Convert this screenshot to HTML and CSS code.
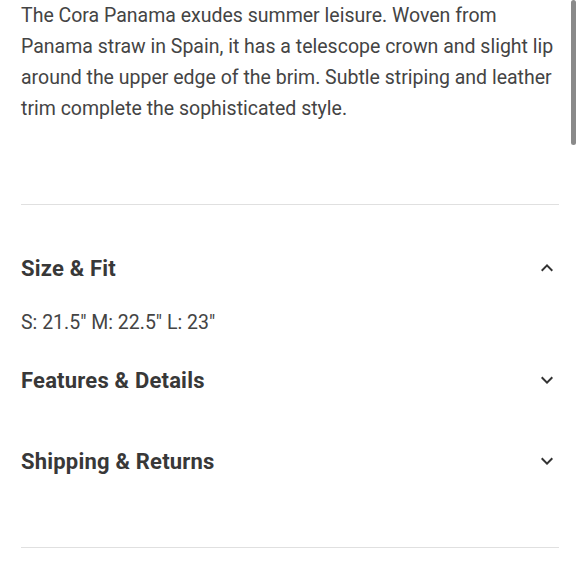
FILE: index.html
```html
<!DOCTYPE html>
<html lang="en">
<head>
  <meta charset="UTF-8" />
  <meta name="viewport" content="width=device-width, initial-scale=1" />
  <title>Cora Panama</title>
  <link rel="stylesheet" href="styles.css">
</head>
<body>
<div class="scroll-thumb"></div>
<div class="product-info">
  <p class="description">The Cora Panama exudes summer leisure. Woven from Panama straw in Spain, it has a telescope crown and slight lip around the upper edge of the brim. Subtle striping and leather trim complete the sophisticated style.</p>

  <div class="accordion">
    <div class="acc-item open">
      <div class="acc-head">
        <h3>Size &amp; Fit</h3>
        <svg class="chevron" viewBox="0 0 24 24" width="24" height="24"><path d="M7.4 15.4 12 10.8l4.6 4.6L18 14l-6-6-6 6z"/></svg>
      </div>
      <div class="acc-panel">S: 21.5" M: 22.5" L: 23"</div>
    </div>
    <div class="acc-item">
      <div class="acc-head">
        <h3>Features &amp; Details</h3>
        <svg class="chevron" viewBox="0 0 24 24" width="24" height="24"><path d="M16.6 8.6 12 13.2 7.4 8.6 6 10l6 6 6-6z"/></svg>
      </div>
    </div>
    <div class="acc-item last">
      <div class="acc-head">
        <h3>Shipping &amp; Returns</h3>
        <svg class="chevron" viewBox="0 0 24 24" width="24" height="24"><path d="M16.6 8.6 12 13.2 7.4 8.6 6 10l6 6 6-6z"/></svg>
      </div>
    </div>
  </div>
</div>
</body>
</html>
```

FILE: styles.css
```css
html, body {
  margin: 0;
  padding: 0;
  background: #fff;
}

body {
  font-family: Roboto, "Liberation Sans", sans-serif;
  color: #444;
}

.product-info {
  padding: 0 21px;
}

.description {
  margin: 0 0 80px;
  font-size: 19.5px;
  line-height: 31px;
}

.accordion {
  display: flex;
  flex-direction: column;
  gap: 22px;
  border-top: 1px solid #e0e0e0;
  border-bottom: 1px solid #e0e0e0;
  padding: 43px 0 66px;
}

.acc-head {
  height: 40px;
  display: flex;
  align-items: center;
  justify-content: space-between;
}

.acc-head h3 {
  margin: 0;
  font-size: 22px;
  font-weight: 700;
  letter-spacing: 0.2px;
  color: #383838;
}

.chevron {
  fill: #333;
}

.acc-panel {
  padding-top: 20px;
  font-size: 19.5px;
  line-height: 30px;
}

.acc-item.last {
  margin-top: 19px;
}

.scroll-thumb {
  position: fixed;
  top: 0;
  right: 4px;
  width: 5px;
  height: 145px;
  background: #8a8a8a;
  border-radius: 3px;
}
```
